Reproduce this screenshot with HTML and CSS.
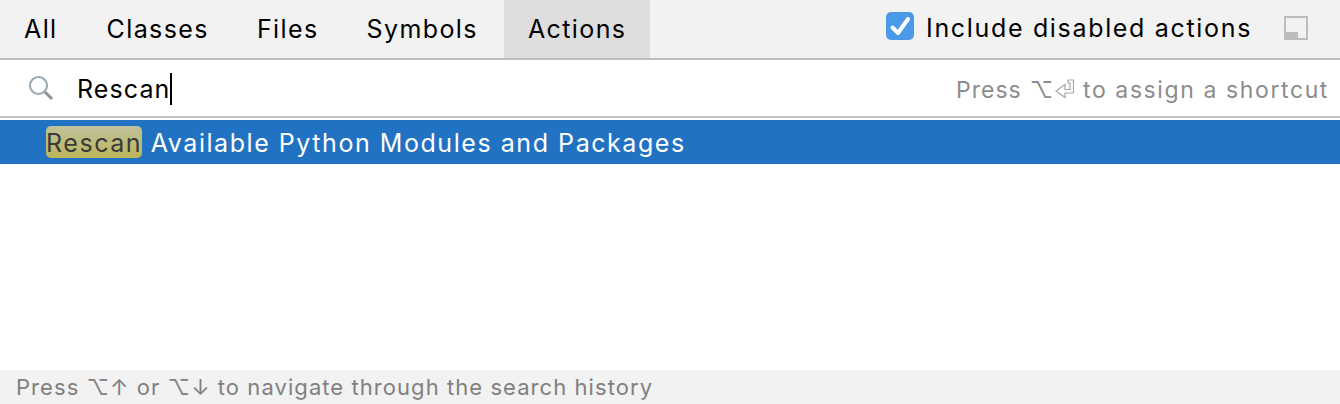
FILE: index.html
```html
<!DOCTYPE html>
<html>
<head>
    <title>Search Everywhere</title>
    <link rel="stylesheet" href="styles.css">
</head>
<body>
    <div class="popup">
        <div class="header">
            <div class="tabs">
                <div class="tab">All</div>
                <div class="tab">Classes</div>
                <div class="tab">Files</div>
                <div class="tab">Symbols</div>
                <div class="tab active">Actions</div>
            </div>
            <div class="options">
                <span class="checkbox">
                    <svg width="28" height="28" viewBox="0 0 28 28">
                        <rect width="28" height="28" rx="5" fill="#4a9ae8"/>
                        <path d="M6.5 15.5 L12 21 L22 7" fill="none" stroke="#fff" stroke-width="4" stroke-linecap="round" stroke-linejoin="round"/>
                    </svg>
                </span>
                <span class="option-label">Include disabled actions</span>
                <svg class="pin" width="24" height="24" viewBox="0 0 24 24">
                    <rect x="1" y="1" width="22" height="22" fill="none" stroke="#bcbcbc" stroke-width="2"/>
                    <rect x="0" y="16" width="14" height="8" fill="#bcbcbc"/>
                </svg>
            </div>
        </div>
        <div class="search">
            <svg class="search-icon" width="26" height="26" viewBox="0 0 26 26">
                <circle cx="10.5" cy="10.5" r="8.5" fill="none" stroke="#9aa7b0" stroke-width="2"/>
                <path d="M17 17 L24 24" stroke="#8a969e" stroke-width="3"/>
            </svg>
            <div class="query">Rescan<span class="caret"></span></div>
            <div class="hint"><span class="hint-press">Press</span> ⌥<svg class="return-icon" width="20" height="20" viewBox="0 0 20 20"><path d="M13 1 H18.5 V13 Q18.5 14 17.5 14 H10 V18.5 L1 12 L10 5.5 V10.5 H15 V4 H13 Z" fill="none" stroke="#a8a8a8" stroke-width="1.2"/></svg> to assign a shortcut</div>
        </div>
        <div class="list">
            <div class="row"><span class="match">Rescan</span> Available Python Modules and Packages</div>
        </div>
        <div class="footer">Press ⌥↑ or ⌥↓ to navigate through the search history</div>
    </div>
</body>
</html>
```

FILE: styles.css
```css
body {
    margin: 0;
    background: white;
    font-family: Inter, "Noto Sans", sans-serif;
    color: black;
    overflow: hidden;
}
.popup {
    width: 1340px;
    height: 404px;
    display: flex;
    flex-direction: column;
}
.header {
    height: 58px;
    background: #f2f2f2;
    border-bottom: 2px solid #bdbdbd;
    display: flex;
    justify-content: space-between;
    font-size: 25px;
    letter-spacing: 1.4px;
}
.tabs {
    display: flex;
}
.tab {
    padding: 0 24px;
    line-height: 58px;
}
.tab:first-child {
    padding-right: 25px;
}
.tab.active {
    margin-left: 2px;
    background: #dedede;
}
.options {
    display: flex;
    align-items: center;
    padding-right: 32px;
}
.checkbox {
    display: flex;
    margin: 0 12px 6px 0;
}
.option-label {
    margin: 0 32px 3px 0;
    letter-spacing: 1.67px;
}
.pin {
    margin-bottom: 2px;
}
.search {
    height: 58px;
    box-sizing: border-box;
    border-bottom: 2px solid #c4c4c4;
    display: flex;
    align-items: center;
    padding: 2px 11px 0 28px;
    font-size: 25px;
    letter-spacing: 1.1px;
}
.search-icon {
    margin-right: 23px;
    margin-top: -2px;
}
.query {
    flex: 1;
    display: flex;
    align-items: center;
}
.caret {
    width: 2px;
    height: 32px;
    background: black;
}
.hint {
    color: #8c8c8c;
    font-size: 23px;
    letter-spacing: 1.6px;
    padding-top: 2px;
}
.hint-press {
    letter-spacing: 1px;
}
.return-icon {
    vertical-align: -1px;
}
.list {
    flex: 1;
    padding-top: 2px;
}
.row {
    height: 44px;
    line-height: 46px;
    background: #2272c3;
    color: white;
    padding-left: 46px;
    font-size: 25px;
    letter-spacing: 1.55px;
}
.match {
    display: inline-block;
    height: 32px;
    line-height: 35px;
    vertical-align: top;
    margin-top: 6px;
    background: linear-gradient(#c0c29c, #bdb55a);
    color: #3a3a3a;
    border-radius: 5px;
}
.footer {
    height: 34px;
    line-height: 34px;
    background: #f2f2f2;
    color: #808080;
    padding-left: 16px;
    font-size: 22px;
    letter-spacing: 1.06px;
}
```
